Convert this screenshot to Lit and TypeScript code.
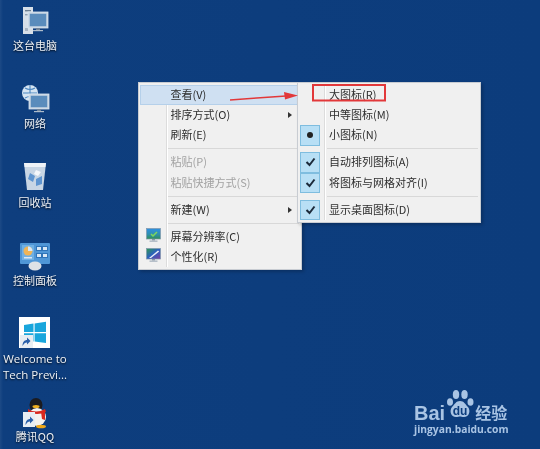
import { LitElement, html, css, svg } from "lit";
import { customElement } from "lit/decorators.js";

const monitor = (x: number, y: number, w: number, h: number) => svg`
  <rect x=${x} y=${y} width=${w} height=${h} fill="#c4d3e2" stroke="#dce6f0" stroke-width=".8"/>
  <rect x=${x + 1.8} y=${y + 1.8} width=${w - 3.6} height=${h - 3.6} fill="#5a8cbc"/>
  <rect x=${x + w / 2 - 2} y=${y + h} width="4" height="2.2" fill="#6f8298"/>
  <rect x=${x + w / 2 - 5} y=${y + h + 2} width="10" height="1.2" fill="#aebccb"/>`;

const shortcut = (x: number, y: number, w: number, h: number) => svg`
  <rect x=${x} y=${y} width=${w} height=${h} fill="#e8edf2"/>
  <path transform="translate(${x + 2.500} ${y + 2})" d="M0 ${h - 4}c0-4 2-6 4.500-6v-2.500l3.500 3.500-3.500 3.500v-2c-2 0-3 1-4.500 3.500z" fill="#2a5fa8"/>`;

const icons = {
  pc: html`<svg width="30" height="32" viewBox="0 0 30 32">
    <rect x="3" y="2" width="10" height="27" fill="#d7dfe8"/>
    <rect x="5" y="5" width="6" height="1.400" fill="#6d7f92"/><rect x="5" y="9" width="6" height="1.400" fill="#8fa0b2"/>
    <rect x="5" y="23" width="3" height="3" fill="#a7b4c2"/>
    ${monitor(8, 7, 20, 16)}</svg>`,
  net: html`<svg width="30" height="32" viewBox="0 0 30 32">
    <circle cx="10" cy="9" r="8" fill="#d5e4f2"/><path d="M3 9h14M10 1v16M5 4q5 3 10 0M5 14q5-3 10 0" stroke="#4a86c0" stroke-width="1.100" fill="none"/>
    ${monitor(9, 10, 20, 15)}</svg>`,
  bin: html`<svg width="26" height="32" viewBox="0 0 26 32">
    <path d="M2 3h22l-3 27H5z" fill="#c8d6e5"/><path d="M2 3h22l-.6 4H2.600z" fill="#eef3f8"/>
    <path d="M8 13l5 3-2 6-5-3zM14 19l6-3 0 8-6 2z" fill="#5f95d0"/><path d="M14 10l5 2-3 4-4-2z" fill="#f4f7fb"/></svg>`,
  cp: html`<svg width="32" height="32" viewBox="0 0 32 32">
    <rect x="1" y="2" width="30" height="21" rx="1" fill="#4f96d6"/>
    <rect x="3" y="4" width="12" height="15" fill="#6fb0e4"/>
    <circle cx="9" cy="10" r="4.500" fill="#eeb457"/><path d="M9 10V5.500a4.500 4.500 0 0 1 4.500 4.500z" fill="#d9e8f5"/>
    <rect x="17" y="5" width="12" height="5" fill="#2f74b8"/><rect x="18" y="6" width="4" height="3" fill="#d9e8f5"/><rect x="24" y="6" width="4" height="3" fill="#d9e8f5"/>
    <rect x="17" y="12" width="12" height="5" fill="#2f74b8"/><rect x="18" y="13" width="4" height="3" fill="#d9e8f5"/><rect x="24" y="13" width="4" height="3" fill="#d9e8f5"/>
    <rect x="5" y="16" width="8" height="1.500" fill="#d9e8f5"/>
    <ellipse cx="16" cy="25" rx="6.500" ry="4.500" fill="#dfe2e6"/></svg>`,
  win: html`<svg width="32" height="32" viewBox="0 0 32 32">
    <rect width="31" height="31" fill="#fff"/>
    <path d="M5 8l9.500-1.400V15H5zM15.600 6.400L27 4.800V15H15.600zM5 16.200h9.500v8.400L5 23.200zM15.600 16.200H27V26l-11.400-1.600z" fill="#19a6dc"/>
    ${shortcut(1, 18, 13, 13)}</svg>`,
  qq: html`<svg width="30" height="32" viewBox="0 0 30 32">
    <ellipse cx="16" cy="8" rx="6.500" ry="7" fill="#1b1b20"/>
    <ellipse cx="17" cy="20" rx="9" ry="9" fill="#f4f2ee"/>
    <path d="M8 12q8 5 17 0l1 3q-9 4-18 0z" fill="#d8281e"/><path d="M21 15l4 0 0 8-3-1z" fill="#d8281e"/>
    <ellipse cx="16" cy="9.500" rx="3.500" ry="1.500" fill="#f0b020"/>
    <ellipse cx="21" cy="29.500" rx="5" ry="1.800" fill="#f0a818"/>
    ${shortcut(3, 15, 12, 15)}</svg>`,
};

const desk = [
  { i: icons.pc, top: 5, lab: 1, label: ["这台电脑"] },
  { i: icons.net, top: 84, lab: 0, label: ["网络"] },
  { i: icons.bin, top: 160, lab: 3, label: ["回收站"] },
  { i: icons.cp, top: 241, lab: 0, label: ["控制面板"] },
  { i: icons.win, top: 317, lab: 2, label: ["Welcome to", "Tech Previ..."] },
  { i: icons.qq, top: 397, lab: 0, label: ["腾讯QQ"] },
];

const screenIcon = (alt: boolean) => html`<svg width="15" height="16" viewBox="0 0 15 16">
  <rect x="0.500" y="0.500" width="14" height="10.500" fill="url(#${alt ? "sa" : "sb"})" stroke="#7f97ad" stroke-width=".7"/>
  <path d=${alt ? "M3 10L12 2.500l1.200 1L5 10z" : "M5 6l2 2 4-4" } fill=${alt ? "#e8eef6" : "none"} stroke=${alt ? "none" : "#7fd85a"} stroke-width="1.500"/>
  <rect x="6" y="11" width="3" height="1.500" fill="#8796a6"/>
  <rect x="3.500" y="12.500" width="8" height="1.300" fill="#a8b4c0"/></svg>`;

@customElement("app-root")
export class AppRoot extends LitElement {
  static styles = css`
    :host { display: block; }
    .desktop {
      position: relative; width: 540px; height: 449px; overflow: hidden;
      background: linear-gradient(90deg, #1d4a86 0, #0e3e7e 3px, #0c3c7c 100%);
      font-family: "Noto Sans CJK SC", "Noto Sans", sans-serif; font-size: 11px;
    }
    .defs { position: absolute; width: 0; height: 0; }
    .ic {
      position: absolute; left: 0; width: 70px; display: flex; flex-direction: column; align-items: center;
      color: #eef2f7; text-shadow: 0 1px 2px #000d; line-height: 15px; filter: blur(.4px);
    }
    .ic svg { display: block; height: 32px; }
    .ic .lab { text-align: center; white-space: nowrap; }
    .ic .lat { font-family: "Open Sans", sans-serif; font-size: 11.500px; line-height: 15.700px; }
    .menu {
      position: absolute; top: 82px; box-sizing: border-box; padding: 1.500px 2px 2px 1px;
      background: #f0f0f0; border: 1px solid #c8ccd2; color: #2e2e2e; filter: blur(.4px);
      box-shadow: 2px 2px 3px #0003;
    }
    .main { left: 138px; width: 164px; height: 188px; }
    .sub { left: 297px; width: 184px; height: 141px; }
    .rail {
      position: absolute; top: 2px; bottom: 2px; width: 1px; background: #dcdcdc; box-shadow: 1px 0 0 #fff;
    }
    .main .rail { left: 27px; }
    .sub .rail { left: 26px; }
    .row { position: relative; display: flex; align-items: center; height: 20.400px; box-sizing: border-box; padding-bottom: 2px; }
    .main .row { padding-left: 30.500px; }
    .sub .row { padding-left: 30px; }
    .row.hl { background: #cfe0f2; box-shadow: inset 0 0 0 1px #b5d0ea; }
    .row.dis { color: #a2a2a2; }
    .chev { position: absolute; right: 7px; top: 7px; width: 0; height: 0;
      border-left: 4px solid #333; border-top: 3px solid transparent; border-bottom: 3px solid transparent; }
    .sep { height: 6.600px; display: flex; align-items: center; padding-left: 28px; }
    .sep::after { content: ""; display: block; flex: 1; height: 1px; background: #d8d8d8; }
    .lead { position: absolute; left: 5.500px; top: 1px; display: flex; }
    .box {
      position: absolute; left: 1px; top: 0; width: 20px; height: 20.400px; box-sizing: border-box;
      background: #b8dff5; border: 1px solid #7fbddf; display: flex; align-items: center; justify-content: center;
    }
    .dot { width: 6px; height: 6px; border-radius: 50%; background: #222; }
    .overlay { position: absolute; left: 0; top: 0; pointer-events: none; filter: blur(.3px); }
    .brand {
      position: absolute; left: 414px; top: 389px; width: 96px; color: #a9c4e4; filter: blur(.4px);
      display: flex; flex-direction: column; align-items: flex-start;
    }
    .logo { display: flex; align-items: flex-end; height: 31px; }
    .bai { font: 700 20px/14px "Liberation Sans", sans-serif; }
    .paw { display: block; }
    .jy { font-size: 16px; line-height: 16px; font-weight: 700; }
    .url { font: 700 10.300px/12px "Open Sans", sans-serif; margin-top: 3px; white-space: nowrap; }
  `;

  row(t: string, o: { hl?: boolean; dis?: boolean; chev?: boolean; lead?: unknown; box?: unknown } = {}) {
    return html`<div class="row ${o.hl ? "hl" : ""} ${o.dis ? "dis" : ""}">
      ${o.lead ? html`<span class="lead">${o.lead}</span>` : ""}
      ${o.box ? html`<span class="box">${o.box}</span>` : ""}
      ${t}${o.chev ? html`<span class="chev"></span>` : ""}
    </div>`;
  }

  render() {
    const check = html`<svg width="11" height="10" viewBox="0 0 11 10"><path d="M1.500 5l3 3 5-6.500" fill="none" stroke="#1c2a3a" stroke-width="2"/></svg>`;
    const dot = html`<span class="dot"></span>`;
    const sep = html`<div class="sep"></div>`;
    return html`<div class="desktop">
      <svg class="defs"><defs>
        <linearGradient id="sb" x1="0" y1="0" x2="0" y2="1"><stop offset="0" stop-color="#2f8fe0"/><stop offset=".55" stop-color="#2f8fb0"/><stop offset="1" stop-color="#2f8f55"/></linearGradient>
        <linearGradient id="sa" x1="0" y1="0" x2="1" y2="1"><stop offset="0" stop-color="#2f9a50"/><stop offset=".5" stop-color="#2a60c0"/><stop offset="1" stop-color="#7a3fa0"/></linearGradient>
      </defs></svg>
      ${desk.map(d => html`<div class="ic" style="top:${d.top}px">${d.i}
        <div class="lab ${d.label.length > 1 ? "lat" : ""}" style="margin-top:${d.lab}px">${d.label.map(l => html`<div>${l}</div>`)}</div></div>`)}

      <div class="menu main">
        <div class="rail"></div>
        ${this.row("查看(V)", { hl: true })}
        ${this.row("排序方式(O)", { chev: true })}
        ${this.row("刷新(E)")}
        ${sep}
        ${this.row("粘贴(P)", { dis: true })}
        ${this.row("粘贴快捷方式(S)", { dis: true })}
        ${sep}
        ${this.row("新建(W)", { chev: true })}
        ${sep}
        ${this.row("屏幕分辨率(C)", { lead: screenIcon(false) })}
        ${this.row("个性化(R)", { lead: screenIcon(true) })}
      </div>

      <div class="menu sub">
        <div class="rail"></div>
        ${this.row("大图标(R)")}
        ${this.row("中等图标(M)")}
        ${this.row("小图标(N)", { box: dot })}
        ${sep}
        ${this.row("自动排列图标(A)", { box: check })}
        ${this.row("将图标与网格对齐(I)", { box: check })}
        ${sep}
        ${this.row("显示桌面图标(D)", { box: check })}
      </div>

      <svg class="overlay" width="540" height="449" viewBox="0 0 540 449">
        <rect x="313" y="85" width="72" height="15.500" fill="none" stroke="#e2383a" stroke-width="2"/>
        <path d="M230 100L286 96" stroke="#e2383a" stroke-width="1.500"/>
        <path d="M284 92l14 3.500-13 4z" fill="#e2383a"/>
      </svg>

      <div class="brand">
        <div class="logo">
          <span class="bai">Bai</span>
          <svg class="paw" width="30" height="31" viewBox="0 0 30 31">
            <ellipse cx="5" cy="13" rx="3" ry="3.800" fill="#a9c4e4"/>
            <ellipse cx="11" cy="5.500" rx="3.200" ry="4.500" fill="#a9c4e4"/>
            <ellipse cx="19.500" cy="5.500" rx="3.200" ry="4.500" fill="#a9c4e4"/>
            <ellipse cx="25.500" cy="13" rx="3" ry="3.800" fill="#a9c4e4"/>
            <path d="M15 12c4 0 5 3 8 6 3 4 1 10-4 10-2 0-3-.6-4-.6s-2 .6-4 .6c-5 0-7-6-4-10 3-3 4-6 8-6z" fill="#a9c4e4"/>
            <text x="15" y="26" text-anchor="middle" font-family="Liberation Sans" font-weight="700" font-size="12" fill="#0c3c7c">du</text>
          </svg>
          <span class="jy">经验</span>
        </div>
        <div class="url">jingyan.baidu.com</div>
      </div>
    </div>`;
  }
}
